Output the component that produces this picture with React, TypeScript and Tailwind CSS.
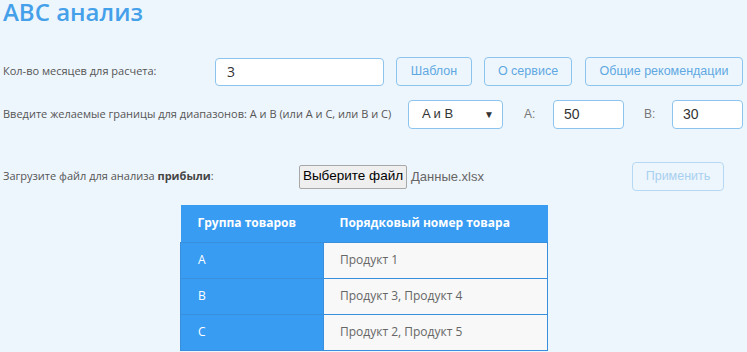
import React from "react";

const rows = [
  { group: "A", items: "Продукт 1" },
  { group: "B", items: "Продукт 3, Продукт 4" },
  { group: "C", items: "Продукт 2, Продукт 5" },
];

function OutlineButton({ children, className = "" }: { children: React.ReactNode; className?: string }) {
  return (
    <button
      className={`h-[29px] rounded-[4px] border border-[#8cc4ee] bg-transparent font-['Liberation_Sans',Arial,sans-serif] text-[12.5px] text-[#5ea8e2] ${className}`}
    >
      {children}
    </button>
  );
}

export default function App() {
  return (
    <div className="h-[352px] w-[747px] overflow-hidden bg-[#eef6fd] font-['Open_Sans',sans-serif] text-[11px] text-[#555]">
      <h1 className="pl-[3px] text-[24px] font-semibold leading-[24px] text-[#45a0ea]">ABC анализ</h1>

      <div className="mt-[33px] flex h-[29px] items-center pl-[3px]">
        <div className="w-[212px]">Кол-во месяцев для расчета:</div>
        <div className="flex h-[28px] w-[169px] items-center rounded-[4px] border border-[#8cc4ee] bg-white pl-[11px] text-[14px] text-[#333]">
          3
        </div>
        <OutlineButton className="ml-[12px] w-[76px]">Шаблон</OutlineButton>
        <OutlineButton className="ml-[12px] w-[88px]">О сервисе</OutlineButton>
        <OutlineButton className="ml-[13px] w-[158px]">Общие рекомендации</OutlineButton>
      </div>

      <div className="mt-[13px] flex h-[30px] items-center pl-[3px]">
        <div className="w-[405px] whitespace-nowrap">Введите желаемые границы для диапазонов: A и B (или A и C, или B и C)</div>
        <div className="flex h-[29px] w-[95px] items-center justify-between rounded-[4px] border border-[#8cc4ee] bg-white pl-[13px] pr-[8px] font-['Liberation_Sans',Arial,sans-serif] text-[13px] text-[#333]">
          <span>A и B</span>
          <span className="text-[10px]">▼</span>
        </div>
        <div className="ml-[21px] w-[29px] font-['Liberation_Sans',Arial,sans-serif] text-[12px] text-[#777]">A:</div>
        <div className="flex h-[29px] w-[71px] items-center rounded-[4px] border border-[#8cc4ee] bg-white pl-[10px] font-['Liberation_Sans',Arial,sans-serif] text-[14px] text-[#333]">
          50
        </div>
        <div className="ml-[20px] w-[28px] font-['Liberation_Sans',Arial,sans-serif] text-[12px] text-[#777]">B:</div>
        <div className="flex h-[29px] w-[71px] items-center rounded-[4px] border border-[#8cc4ee] bg-white pl-[10px] font-['Liberation_Sans',Arial,sans-serif] text-[14px] text-[#333]">
          30
        </div>
      </div>

      <div className="mt-[33px] flex h-[29px] items-center pl-[3px]">
        <div className="w-[296px]">
          Загрузите файл для анализа <b className="font-bold text-[#444]">прибыли</b>:
        </div>
        <button className="h-[24px] w-[108px] rounded-[2px] border border-[#a8a8a8] bg-[#efefef] font-['Liberation_Sans',Arial,sans-serif] text-[13.5px] text-black">
          Выберите файл
        </button>
        <span className="ml-[4px] font-['Liberation_Sans',Arial,sans-serif] text-[13px] text-[#666]">Данные.xlsx</span>
        <OutlineButton className="ml-auto mr-[23px] w-[92px] border-[#b5d9f4] text-[#a8d0f0]">Применить</OutlineButton>
      </div>

      <table className="ml-[180px] mt-[14px] w-[368px] border-collapse text-[12px]">
        <thead>
          <tr className="h-[37px] bg-[#389cf2] text-white">
            <th className="w-[143px] pl-[17px] text-left font-bold">Группа товаров</th>
            <th className="pl-[16px] text-left font-bold">Порядковый номер товара</th>
          </tr>
        </thead>
        <tbody>
          {rows.map((r) => (
            <tr key={r.group} className="h-[36px]">
              <td className="border border-[#3a8fdc] bg-[#389cf2] pl-[17px] text-white">{r.group}</td>
              <td className="border border-[#3a8fdc] bg-[#f8f8f8] pl-[16px] text-[#666]">{r.items}</td>
            </tr>
          ))}
        </tbody>
      </table>
    </div>
  );
}
